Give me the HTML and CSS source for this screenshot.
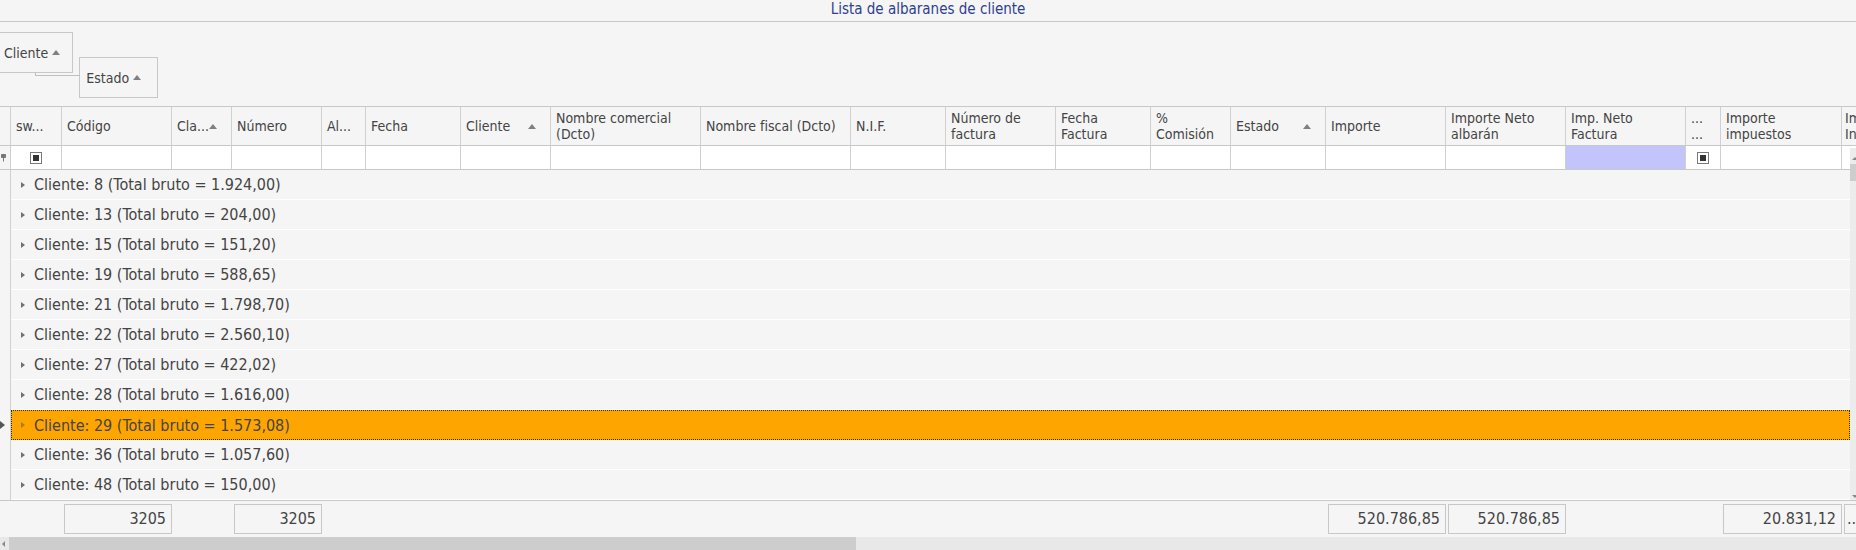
FILE: index.html
```html
<!DOCTYPE html>
<html lang="es">

<head>
    <meta charset="UTF-8">
    <title>Lista de albaranes de cliente</title>
    <link rel="stylesheet" href="styles.css">
</head>

<body>
    <div class="titulo">Lista de albaranes de cliente</div>

    <!-- Panel de agrupación -->
    <div class="panel-grupos">
        <div class="grupo grupo-cliente">Cliente <span class="orden"></span></div>
        <div class="grupo grupo-estado">Estado <span class="orden"></span></div>
    </div>

    <div class="rejilla">
        <!-- Cabecera -->
        <div class="columnas cabecera">
            <div class="celda"></div>
            <div class="celda">sw...</div>
            <div class="celda">Código</div>
            <div class="celda">Cla... <span class="orden"></span></div>
            <div class="celda">Número</div>
            <div class="celda">Al...</div>
            <div class="celda">Fecha</div>
            <div class="celda">Cliente <span class="orden"></span></div>
            <div class="celda">Nombre comercial<br>(Dcto)</div>
            <div class="celda">Nombre fiscal (Dcto)</div>
            <div class="celda">N.I.F.</div>
            <div class="celda">Número de<br>factura</div>
            <div class="celda">Fecha<br>Factura</div>
            <div class="celda">%<br>Comisión</div>
            <div class="celda">Estado <span class="orden"></span></div>
            <div class="celda">Importe</div>
            <div class="celda">Importe Neto<br>albarán</div>
            <div class="celda">Imp. Neto<br>Factura</div>
            <div class="celda">...<br>...</div>
            <div class="celda">Importe<br>impuestos</div>
            <div class="celda">Im<br>In</div>
        </div>

        <!-- Fila de filtro -->
        <div class="columnas filtro">
            <div class="celda indicador">
                <svg width="5" height="8" viewBox="0 0 5 8"><path d="M0.5 0.5h4v3h-4z M2.5 3.5v4" fill="#777" stroke="#777" stroke-width="1"/></svg>
            </div>
            <div class="celda centro"><span class="check"></span></div>
            <div class="celda"></div>
            <div class="celda"></div>
            <div class="celda"></div>
            <div class="celda"></div>
            <div class="celda"></div>
            <div class="celda"></div>
            <div class="celda"></div>
            <div class="celda"></div>
            <div class="celda"></div>
            <div class="celda"></div>
            <div class="celda"></div>
            <div class="celda"></div>
            <div class="celda"></div>
            <div class="celda"></div>
            <div class="celda"></div>
            <div class="celda activa"></div>
            <div class="celda centro"><span class="check"></span></div>
            <div class="celda"></div>
            <div class="celda"></div>
        </div>

        <!-- Filas agrupadas -->
        <div class="grupos">
            <div class="fila"><div class="ind"></div><div class="contenido"><span class="expandir"></span>Cliente: 8 (Total bruto = 1.924,00)</div></div>
            <div class="fila"><div class="ind"></div><div class="contenido"><span class="expandir"></span>Cliente: 13 (Total bruto = 204,00)</div></div>
            <div class="fila"><div class="ind"></div><div class="contenido"><span class="expandir"></span>Cliente: 15 (Total bruto = 151,20)</div></div>
            <div class="fila"><div class="ind"></div><div class="contenido"><span class="expandir"></span>Cliente: 19 (Total bruto = 588,65)</div></div>
            <div class="fila"><div class="ind"></div><div class="contenido"><span class="expandir"></span>Cliente: 21 (Total bruto = 1.798,70)</div></div>
            <div class="fila"><div class="ind"></div><div class="contenido"><span class="expandir"></span>Cliente: 22 (Total bruto = 2.560,10)</div></div>
            <div class="fila"><div class="ind"></div><div class="contenido"><span class="expandir"></span>Cliente: 27 (Total bruto = 422,02)</div></div>
            <div class="fila"><div class="ind"></div><div class="contenido"><span class="expandir"></span>Cliente: 28 (Total bruto = 1.616,00)</div></div>
            <div class="fila seleccionada"><div class="ind"><span class="actual"></span></div><div class="contenido"><span class="expandir"></span>Cliente: 29 (Total bruto = 1.573,08)</div></div>
            <div class="fila"><div class="ind"></div><div class="contenido"><span class="expandir"></span>Cliente: 36 (Total bruto = 1.057,60)</div></div>
            <div class="fila"><div class="ind"></div><div class="contenido"><span class="expandir"></span>Cliente: 48 (Total bruto = 150,00)</div></div>

            <!-- Barra vertical -->
            <div class="barra-vertical">
                <span class="flecha-arriba"></span>
                <span class="pulgar-v"></span>
                <span class="flecha-abajo"></span>
            </div>
        </div>

        <!-- Totales -->
        <div class="columnas pie">
            <div></div>
            <div></div>
            <div><span class="total">3205</span></div>
            <div></div>
            <div><span class="total">3205</span></div>
            <div></div>
            <div></div>
            <div></div>
            <div></div>
            <div></div>
            <div></div>
            <div></div>
            <div></div>
            <div></div>
            <div></div>
            <div><span class="total">520.786,85</span></div>
            <div><span class="total">520.786,85</span></div>
            <div></div>
            <div></div>
            <div><span class="total">20.831,12</span></div>
            <div><span class="total izq">..</span></div>
        </div>

        <!-- Barra horizontal -->
        <div class="barra-horizontal">
            <span class="flecha-izq"></span>
            <span class="pulgar-h"></span>
        </div>
    </div>
</body>

</html>
```

FILE: styles.css
```css
body {
    margin: 0;
    padding: 0;
    background-color: #f5f5f5;
    font-family: "DejaVu Sans Condensed", "DejaVu Sans", sans-serif;
    color: #444;
    width: 1856px;
    height: 550px;
    overflow: hidden;
}

.titulo {
    height: 21px;
    line-height: 18px;
    border-bottom: 1px solid #c8c8c8;
    text-align: center;
    font-size: 15px;
    color: #2d4191;
}

/* Panel de agrupación */
.panel-grupos {
    height: 84px;
    display: flex;
    align-items: flex-start;
}

.grupo {
    height: 41px;
    box-sizing: border-box;
    border: 1px solid #c8c8c8;
    display: flex;
    align-items: center;
    padding: 0 16px 0 6px;
    font-size: 14px;
    position: relative;
}

.grupo .orden {
    margin-left: 4px;
}

.grupo-cliente {
    margin-top: 10px;
    margin-left: -3px;
    padding-right: 12px;
}

.grupo-estado {
    margin-top: 35px;
    margin-left: 6px;
}

/* línea que une los grupos */
.grupo-estado::before {
    content: "";
    position: absolute;
    left: -45px;
    top: 14px;
    width: 44px;
    height: 3px;
    border-left: 1px solid #c0c0c0;
    border-bottom: 1px solid #c0c0c0;
}

.orden {
    display: inline-block;
    width: 0;
    height: 0;
    border-left: 4px solid transparent;
    border-right: 4px solid transparent;
    border-bottom: 5px solid #808080;
}

/* Rejilla */
.rejilla {
    border-top: 1px solid #c8c8c8;
}

.columnas {
    display: grid;
    grid-template-columns: 11px 51px 110px 60px 90px 44px 95px 90px 150px 150px 95px 110px 95px 80px 95px 120px 120px 120px 35px 121px 15px;
}

.celda {
    box-sizing: border-box;
    border-right: 1px solid #d0d0d0;
    border-bottom: 1px solid #c8c8c8;
    overflow: hidden;
    white-space: nowrap;
}

.cabecera .celda {
    height: 39px;
    padding: 0 4px 0 5px;
    display: flex;
    align-items: center;
    justify-content: space-between;
    font-size: 14px;
    line-height: 16px;
}

.cabecera .celda:last-child {
    padding: 0 0 0 3px;
    border-right: none;
}

.cabecera .celda .orden {
    margin-right: 10px;
    flex-shrink: 0;
}

.filtro .celda {
    height: 24px;
    background-color: #fff;
}

.filtro .indicador {
    background-color: #f5f5f5;
    display: flex;
    align-items: center;
    padding-left: 1px;
}

.filtro .centro {
    display: flex;
    align-items: center;
    justify-content: center;
}

.filtro .activa {
    background-color: #c4c4fd;
}

.check {
    width: 12px;
    height: 12px;
    box-sizing: border-box;
    border: 1px solid #7a7a7a;
    padding: 2px;
    background-color: #fff;
}

.check::after {
    content: "";
    display: block;
    width: 6px;
    height: 6px;
    background-color: #333;
}

/* Filas de grupo */
.grupos {
    position: relative;
}

.fila {
    display: flex;
    height: 30px;
}

.fila .ind {
    width: 11px;
    box-sizing: border-box;
    border-right: 1px solid #d0d0d0;
    display: flex;
    align-items: center;
}

.fila .contenido {
    width: 1839px;
    box-sizing: border-box;
    border-bottom: 1px solid #fff;
    display: flex;
    align-items: center;
    padding-left: 10px;
    font-size: 16px;
}

.expandir {
    width: 0;
    height: 0;
    border-top: 3.5px solid transparent;
    border-bottom: 3.5px solid transparent;
    border-left: 4px solid #707070;
    margin-right: 9px;
}

.seleccionada .contenido {
    background-color: #ffa500;
    border: 1px dotted #3a3020;
    padding-left: 9px;
}

.seleccionada .expandir {
    border-left-color: #b07a20;
}

.actual {
    width: 0;
    height: 0;
    border-top: 4px solid transparent;
    border-bottom: 4px solid transparent;
    border-left: 5px solid #555;
}

.barra-vertical {
    position: absolute;
    right: 0;
    top: -22px;
    width: 6px;
    height: 352px;
    background-color: #ececec;
}

.barra-vertical span {
    position: absolute;
    left: 0;
}

.flecha-arriba {
    top: 9px;
    left: 2px !important;
    width: 0;
    height: 0;
    border-left: 3px solid transparent;
    border-right: 3px solid transparent;
    border-bottom: 3px solid #888;
}

.pulgar-v {
    top: 16px;
    width: 6px;
    height: 17px;
    background-color: #cdcdcd;
}

.flecha-abajo {
    bottom: 2px;
    left: 2px !important;
    width: 0;
    height: 0;
    border-left: 3px solid transparent;
    border-right: 3px solid transparent;
    border-top: 3px solid #888;
}

/* Totales */
.pie {
    height: 37px;
    box-sizing: border-box;
    border-top: 1px solid #c8c8c8;
    padding-top: 3px;
}

.total {
    display: block;
    height: 30px;
    margin-left: 2px;
    box-sizing: border-box;
    border: 1px solid #c8c8c8;
    text-align: right;
    padding-right: 5px;
    line-height: 28px;
    font-size: 16px;
    overflow: hidden;
}

.total.izq {
    text-align: left;
    padding: 0 0 0 2px;
    border-right: none;
}

/* Barra horizontal */
.barra-horizontal {
    height: 13px;
    background-color: #e8e8e8;
    display: flex;
    align-items: center;
}

.flecha-izq {
    width: 0;
    height: 0;
    border-top: 3px solid transparent;
    border-bottom: 3px solid transparent;
    border-right: 3px solid #888;
    margin: 0 4px 0 2px;
}

.pulgar-h {
    width: 847px;
    height: 13px;
    background-color: #cdcdcd;
}
```
